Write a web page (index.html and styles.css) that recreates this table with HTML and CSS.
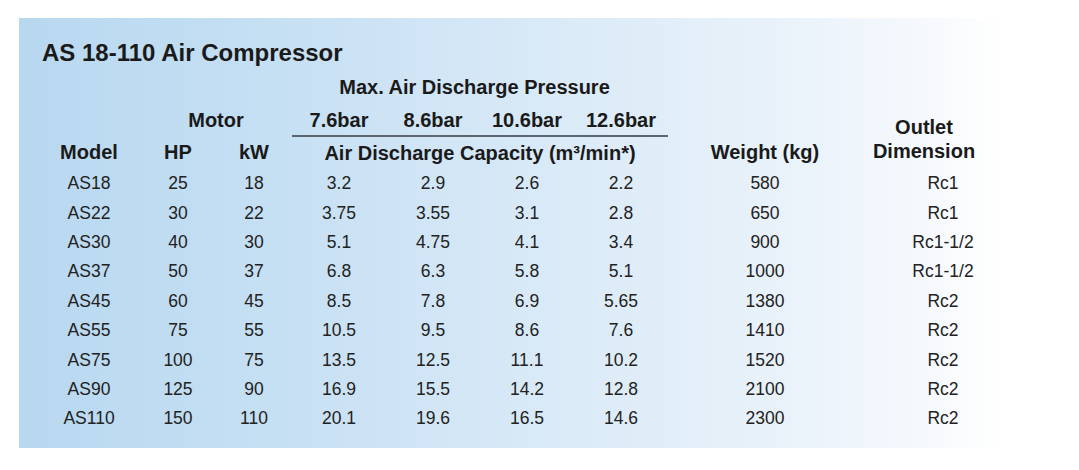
FILE: index.html
```html
<!DOCTYPE html>
<html>
<head>
<meta charset="utf-8">
<link rel="stylesheet" href="styles.css">
</head>
<body>
<div class="panel">
  <h1 class="title">AS 18-110 Air Compressor</h1>
  <table class="spec">
    <colgroup>
      <col class="c-model"><col class="c-hp"><col class="c-kw">
      <col class="c-p"><col class="c-p"><col class="c-p"><col class="c-p">
      <col class="c-weight"><col class="c-outlet">
    </colgroup>
    <tr class="r1">
      <th></th><th></th><th></th>
      <th colspan="4" class="pressure">Max. Air Discharge Pressure</th>
      <th></th><th></th>
    </tr>
    <tr class="r2">
      <th></th>
      <th colspan="2" class="motor">Motor</th>
      <th class="bar">7.6bar</th>
      <th class="bar">8.6bar</th>
      <th class="bar">10.6bar</th>
      <th class="bar">12.6bar</th>
      <th></th>
      <th rowspan="2" class="outlet">Outlet<br>Dimension</th>
    </tr>
    <tr class="r3">
      <th>Model</th>
      <th>HP</th>
      <th>kW</th>
      <th colspan="4">Air Discharge Capacity (m³/min*)</th>
      <th>Weight (kg)</th>
    </tr>
    <tr><td>AS18</td><td>25</td><td>18</td><td>3.2</td><td>2.9</td><td>2.6</td><td>2.2</td><td>580</td><td class="o">Rc1</td></tr>
    <tr><td>AS22</td><td>30</td><td>22</td><td>3.75</td><td>3.55</td><td>3.1</td><td>2.8</td><td>650</td><td class="o">Rc1</td></tr>
    <tr><td>AS30</td><td>40</td><td>30</td><td>5.1</td><td>4.75</td><td>4.1</td><td>3.4</td><td>900</td><td class="o">Rc1-1/2</td></tr>
    <tr><td>AS37</td><td>50</td><td>37</td><td>6.8</td><td>6.3</td><td>5.8</td><td>5.1</td><td>1000</td><td class="o">Rc1-1/2</td></tr>
    <tr><td>AS45</td><td>60</td><td>45</td><td>8.5</td><td>7.8</td><td>6.9</td><td>5.65</td><td>1380</td><td class="o">Rc2</td></tr>
    <tr><td>AS55</td><td>75</td><td>55</td><td>10.5</td><td>9.5</td><td>8.6</td><td>7.6</td><td>1410</td><td class="o">Rc2</td></tr>
    <tr><td>AS75</td><td>100</td><td>75</td><td>13.5</td><td>12.5</td><td>11.1</td><td>10.2</td><td>1520</td><td class="o">Rc2</td></tr>
    <tr><td>AS90</td><td>125</td><td>90</td><td>16.9</td><td>15.5</td><td>14.2</td><td>12.8</td><td>2100</td><td class="o">Rc2</td></tr>
    <tr><td>AS110</td><td>150</td><td>110</td><td>20.1</td><td>19.6</td><td>16.5</td><td>14.6</td><td>2300</td><td class="o">Rc2</td></tr>
  </table>
</div>
</body>
</html>
```
FILE: styles.css
```css
html, body {
  margin: 0;
  padding: 0;
  background: #ffffff;
}
body {
  font-family: "Liberation Sans", Arial, sans-serif;
  color: #1e1e1e;
  width: 1079px;
  height: 470px;
  overflow: hidden;
}
.panel {
  margin: 18px 0 0 19px;
  width: 981px;
  height: 430px;
  box-sizing: border-box;
  padding: 20px 0 0 0;
  background: linear-gradient(90deg, #b8d8f0 0%, #c5dff3 25%, #d8e9f7 52%, #e9f2fa 78%, #f6f9fd 93%, #ffffff 100%);
}
.title {
  margin: 0 0 0 23px;
  font-size: 24px;
  font-weight: bold;
  line-height: 30px;
  height: 30px;
  color: #1a1a1a;
}
.spec {
  margin: 4px 0 0 19px;
  border-collapse: collapse;
  table-layout: fixed;
  width: 952px;
}
.c-model { width: 102px; }
.c-hp { width: 76px; }
.c-kw { width: 76px; }
.c-p { width: 94px; }
.c-weight { width: 194px; }
.c-outlet { width: 128px; }
.spec th, .spec td {
  padding: 0;
  text-align: center;
  white-space: nowrap;
}
.spec th {
  font-size: 20px;
  font-weight: bold;
  color: #1a1a1a;
}
.spec td {
  font-size: 17.5px;
  height: 29.4px;
  color: #222222;
}
.r1 th { height: 31px; }
.r2 th { height: 30px; }
.r3 th { height: 32px; }
.pressure { padding-right: 11px !important; padding-bottom: 2px !important; }
.spec .bar { border-bottom: 2px solid #5c6670; }
.outlet {
  vertical-align: bottom;
  line-height: 24px;
  padding-bottom: 6px !important;
  padding-right: 4px !important;
}
.spec td.o { padding-left: 34px; }
```
